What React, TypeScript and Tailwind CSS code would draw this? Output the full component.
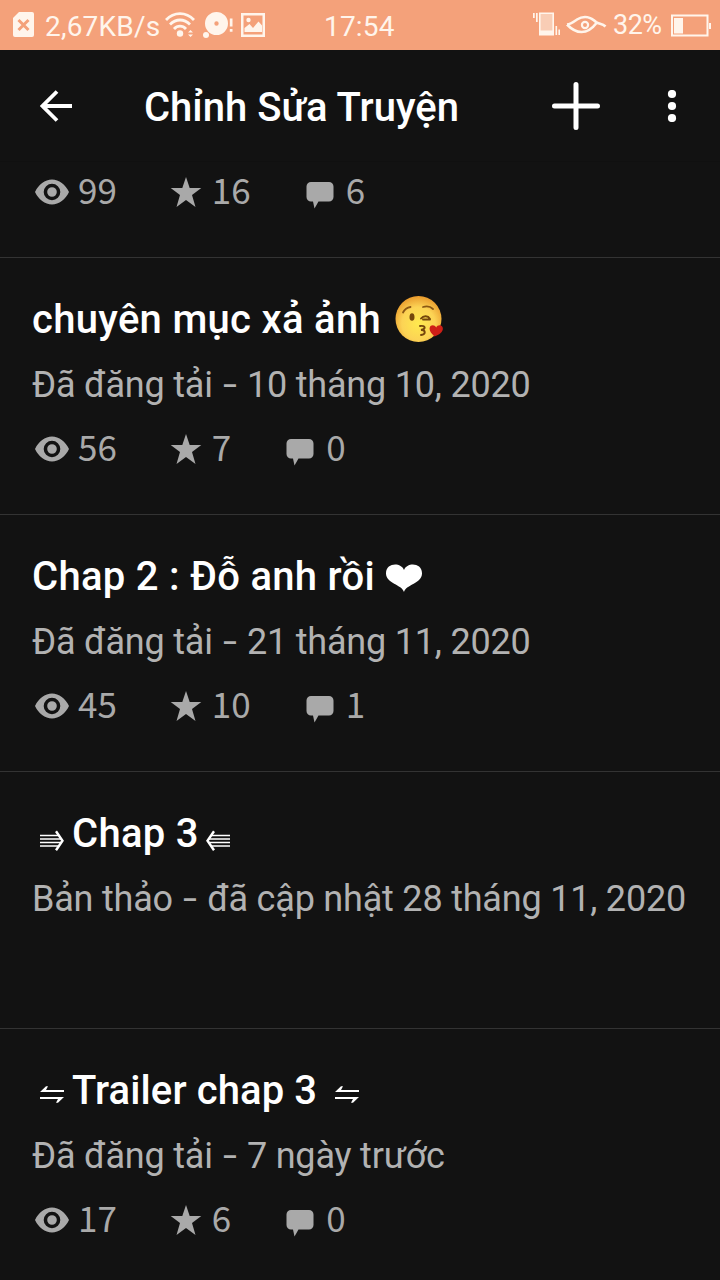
import React from "react";

type Chapter = {
  title: React.ReactNode;
  titleClass: string;
  status: string;
  date: string;
  stats?: [string, string, string];
};

function Stats({ values }: { values: [string, string, string] }) {
  const num = "-mt-[6px] font-['Noto_Sans_CJK_SC',sans-serif] text-[35px] leading-[44px]";
  return (
    <div className="flex h-11 items-center pl-8 text-[#a9a9a9]">
      <svg className="h-10 w-10 shrink-0" viewBox="0 0 40 40" fill="currentColor">
        <path fillRule="evenodd" d="M3 20C6.500 12.500 13 7.500 20 7.500s13.500 5 17 12.500C33.500 27.500 27 32.500 20 32.500S6.500 27.500 3 20ZM20 11.700a8.300 8.300 0 1 0 0 16.600 8.300 8.300 0 0 0 0-16.600Zm0 3.500a4.800 4.800 0 1 1 0 9.600 4.800 4.800 0 0 1 0-9.600Z" />
      </svg>
      <span className={`${num} ml-[6px]`}>{values[0]}</span>
      <svg className="ml-[49px] h-10 w-10 shrink-0" viewBox="0 0 40 40" fill="currentColor">
        <path d="m20 5 3.700 10.900H35.300l-9.300 7L29.500 35 20 28.100 10.500 35 14 22.900l-9.300-7h11.600Z" />
      </svg>
      <span className={`${num} ml-[6px]`}>{values[1]}</span>
      <svg className="ml-[49px] h-10 w-10 shrink-0" viewBox="0 0 40 40" fill="currentColor">
        <path d="M11 10h18a4.500 4.500 0 0 1 4.500 4.500v10.500a4.500 4.500 0 0 1-4.500 4.500H18.500L14.500 36.500l-1.500-7h-2A4.500 4.500 0 0 1 6.500 25V14.500a4.500 4.500 0 0 1 4.500-4.500Z" />
      </svg>
      <span className={`${num} ml-[6px]`}>{values[2]}</span>
    </div>
  );
}

function KissEmoji() {
  return (
    <svg className="-mt-[3px] ml-[14px] h-12 w-12" viewBox="0 0 48 48" fill="none">
      <defs>
        <radialGradient id="face" cx="50%" cy="60%" r="60%">
          <stop offset="0" stopColor="#ffe94e" />
          <stop offset="0.6" stopColor="#fcd355" />
          <stop offset="1" stopColor="#e99a2c" />
        </radialGradient>
      </defs>
      <circle cx="23.500" cy="24" r="23" fill="url(#face)" />
      <path d="M8 17.500c1.500-3 4-5 7.500-5.500M28 12c4-1.300 7.500-.5 10 2" stroke="#8a5714" strokeWidth="1.800" strokeLinecap="round" />
      <ellipse cx="17" cy="22" rx="2.500" ry="3.800" fill="#75460c" />
      <path d="M26 23.500c2.500-3 7-3 9 .5M28 24.500h7M25 31c6-1 6 3 1 4 5 0 5 4.500 0 5" stroke="#75460c" strokeWidth="1.900" strokeLinecap="round" />
      <path d="M39.500 41.500c-3-3-5.500-5.500-4.800-8.800.8-3.200 5-3.200 6.500-.2 1-2.700 5-3 6.300-.5 1.600 4-2.500 7.500-8 9.500Z" fill="#ce1f17" />
    </svg>
  );
}

const TripleArrow = ({ left = false }: { left?: boolean }) => (
  <svg className={left ? "ml-[7px] mt-[11px] h-6 w-6 -scale-x-100" : "ml-2 mr-2 mt-[11px] h-6 w-6"} viewBox="0 0 24 24" fill="none" stroke="white" strokeWidth="1.700">
    <path d="M0 7.500h18M0 11h22M0 14.500h22M0 18h18" />
    <path strokeWidth="2.400" d="M16 3.200l6.500 9.500-6.500 9.500" />
  </svg>
);

const Harpoons = ({ end = false }: { end?: boolean }) => (
  <svg className={end ? "ml-[18px] mt-[6px] h-6 w-6" : "ml-2 mr-2 mt-[6px] h-6 w-6"} viewBox="0 0 24 24" fill="white">
    <path d="M24 10H0L6 4.200H8L6 8H24ZM0 15H24L18 20.800H16L18 17H0Z" />
  </svg>
);

const chapters: Chapter[] = [
  {
    title: <>chuyên mục xả ảnh<KissEmoji /></>,
    titleClass: "tracking-[0.3px]",
    status: "Đã đăng tải",
    date: "10 tháng 10, 2020",
    stats: ["56", "7", "0"],
  },
  {
    title: (
      <>
        Chap 2 : Đỗ anh rồi
        <svg className="ml-[11px] mt-[2px] h-7 w-9" viewBox="0 0 36 28" fill="white">
          <path d="M18 28C16 20.500 0 19.500 0 9.500-.200-1.500 15-2 18 6 21-2 36.200-1.500 36 9.500 36 19.500 20 20.500 18 28Z" />
        </svg>
      </>
    ),
    titleClass: "tracking-[0.3px]",
    status: "Đã đăng tải",
    date: "21 tháng 11, 2020",
    stats: ["45", "10", "1"],
  },
  {
    title: <><TripleArrow />Chap 3<TripleArrow left /></>,
    titleClass: "tracking-[0.3px]",
    status: "Bản thảo",
    date: "đã cập nhật 28 tháng 11, 2020",
  },
  {
    title: <><Harpoons />Trailer chap 3<Harpoons end /></>,
    titleClass: "tracking-[0.1px]",
    status: "Đã đăng tải",
    date: "7 ngày trước",
    stats: ["17", "6", "0"],
  },
];

function StatusBar() {
  return (
    <div className="flex h-[50px] shrink-0 items-center bg-[#f4a17a] text-[#fff5ec]">
      <svg className="ml-[13px] h-[26px] w-[21px]" viewBox="0 0 21 26">
        <path fill="currentColor" d="M6 0h13a2 2 0 0 1 2 2v21a2 2 0 0 1-2 2H2a2 2 0 0 1-2-2V6Z" />
        <path d="m5.500 8 10 10m0-10-10 10" stroke="#f4a17a" strokeWidth="3" />
      </svg>
      <span className="ml-[11px] mt-[3px] w-[116px] whitespace-nowrap text-[28px] leading-[47px] tracking-[0.2px]">2,67KB/s</span>
      <svg className="ml-1 h-[26px] w-[30px]" viewBox="0 0 30 26" fill="none" stroke="currentColor" strokeWidth="2.800">
        <path d="M1 8c8-8.500 20-8.500 28 0M5 12.500c6-6 14-6 20 0M9 17c3.500-3.800 8.500-3.800 12 0" />
        <circle cx="15" cy="21.500" r="3.200" fill="currentColor" stroke="none" />
        <path d="m23 20.500 2.500-2.500 2.500 2.500ZM23 22.500l2.500 2.500L28 22.500Z" fill="currentColor" stroke="none" />
      </svg>
      <svg className="ml-[8px] h-[28px] w-[30px]" viewBox="0 0 30 28" fill="currentColor">
        <path fillRule="evenodd" d="M13.500 1a11.500 11.500 0 1 1 0 23 11.500 11.500 0 0 1 0-23Zm0 9.300a2.200 2.200 0 1 0 0 4.400 2.200 2.200 0 0 0 0-4.400Z" />
        <circle cx="3" cy="24" r="3" />
        <path d="M26.800 7.500h2.700v8h-2.700ZM26.800 18h2.700v2.700h-2.700Z" />
      </svg>
      <svg className="ml-2 h-[24px] w-[24px]" viewBox="0 0 24 24">
        <path fill="none" stroke="currentColor" strokeWidth="2.500" d="M1.250 1.250h21.500v21.500H1.250Z" />
        <path fill="currentColor" d="M3.500 19v-4l5-4 3.500 4 5.500-6.500 3.500 4V19Z" />
        <circle cx="7.500" cy="7" r="2.200" fill="currentColor" />
      </svg>
      <span className="ml-[59px] mt-[3px] text-[28px] leading-[47px] tracking-[0.2px]">17:54</span>
      <svg className="ml-auto h-[26px] w-[27px]" viewBox="0 0 27 26">
        <path fill="#f9cdb5" stroke="currentColor" strokeWidth="1.600" d="M6.800 1.300h13.400v20H6.800Z" />
        <path fill="currentColor" d="M6 18.500h15v5H6ZM0 1h1.700v5H0ZM3 1h1.700v9H3ZM22.500 14h1.600V23h-1.600ZM25.400 17.500H27V23h-1.600Z" />
      </svg>
      <svg className="ml-[6px] h-[20px] w-[41px]" viewBox="0 0 41 20" fill="none" stroke="currentColor" strokeWidth="2.600">
        <path d="M1 9.500c4-.5 7-3 10-5 7-4.500 14-2.500 19 2.500 3 2.500 6 1 9.500 4.500M1 9.500c9 9.500 20 11 29.500-1.500" />
        <circle cx="19" cy="10" r="3.100" strokeWidth="2.200" />
      </svg>
      <span className="ml-[6px] w-[50px] whitespace-nowrap text-[27px] leading-[50px] tracking-[-0.5px]">32%</span>
      <svg className="ml-2 mr-[9px] h-[23px] w-[40px]" viewBox="0 0 40 23">
        <path fill="none" stroke="currentColor" strokeWidth="2" d="M1 1.500h35.500v20H1Z" />
        <path fill="currentColor" d="M3 4h9v15.500H3ZM38 9h2v6h-2Z" />
      </svg>
    </div>
  );
}

export default function App() {
  return (
    <div className="flex h-[1280px] w-[720px] flex-col overflow-hidden bg-[#121212] font-['Roboto',sans-serif]">
      <StatusBar />
      <header className="flex h-[112px] shrink-0 items-center border-b border-[#101010] text-white">
        <svg className="ml-10 h-8 w-8" viewBox="0 0 32 32" fill="none" stroke="white" strokeWidth="3.800">
          <path d="M32 16H3M17 1.500 2.500 16 17 30.500" />
        </svg>
        <h1 className="ml-[72px] mt-1 w-[315px] whitespace-nowrap text-[40px] font-medium leading-[56px]">Chỉnh Sửa Truyện</h1>
        <svg className="ml-[93px] h-12 w-12" viewBox="0 0 48 48" stroke="white" strokeWidth="5" strokeLinecap="round">
          <path d="M24 2.500v43M2.500 24h43" />
        </svg>
        <svg className="ml-[67px] h-8 w-[10px]" viewBox="0 0 10 32" fill="white">
          <circle cx="5" cy="4" r="4.100" />
          <circle cx="5" cy="16" r="4.100" />
          <circle cx="5" cy="28" r="4.100" />
        </svg>
      </header>
      <main>
        <div className="h-[95px] pt-2">
          <Stats values={["99", "16", "6"]} />
        </div>
        {chapters.map((c) => (
          <section key={c.status + c.date} className="h-[257px] border-t border-[#333333] pt-[34px]">
            <h2 className={`flex h-14 items-center whitespace-pre pl-8 text-[40px] font-medium leading-[56px] text-white ${c.titleClass}`}>{c.title}</h2>
            <p className="mt-[13px] h-12 whitespace-nowrap pl-8 text-[36px] leading-[48px] tracking-[-0.2px] text-[#b2b2b2]">
              {c.status} <span className="mx-[3.5px] inline-block scale-x-[1.4]">-</span> {c.date}
            </p>
            {c.stats && (
              <div className="mt-[18px]">
                <Stats values={c.stats} />
              </div>
            )}
          </section>
        ))}
      </main>
    </div>
  );
}
